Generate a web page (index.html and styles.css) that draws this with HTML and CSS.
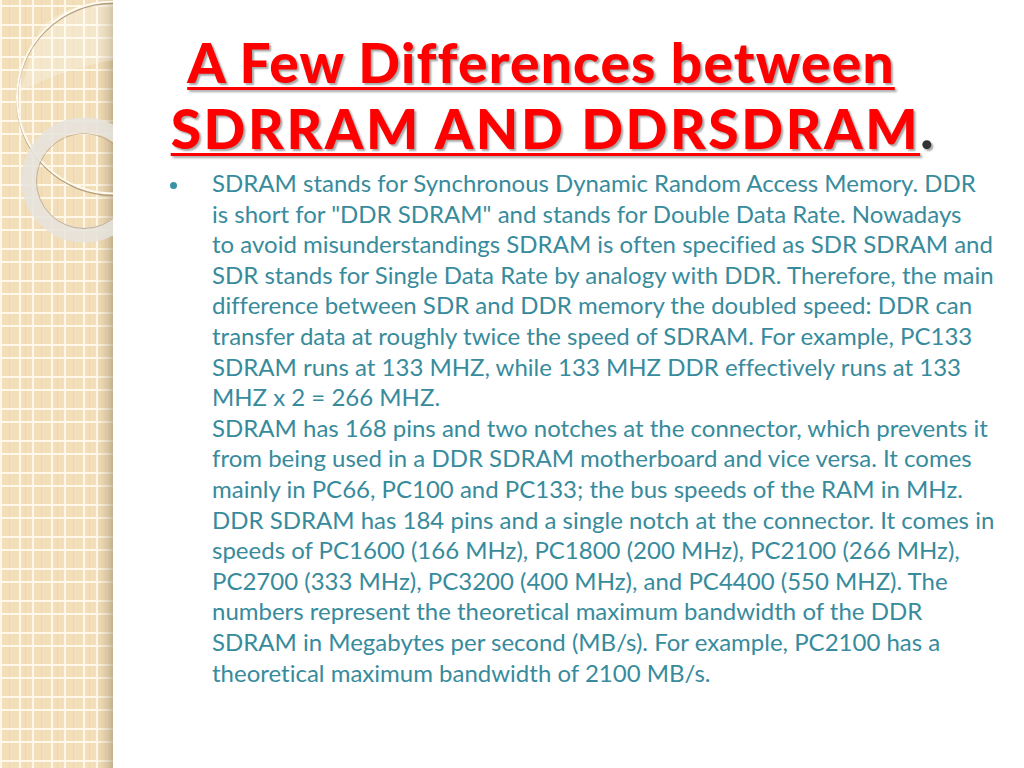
FILE: index.html
```html
<!DOCTYPE html>
<html>
<head>
<meta charset="utf-8">
<link rel="stylesheet" href="styles.css">
</head>
<body>
<div class="slide">
  <div class="strip">
    <svg class="deco" width="113" height="260" viewBox="0 0 113 260">
      <path d="M40 28 A96 96 0 0 1 113 3 L113 60 Q60 70 20 92 Z" fill="#ffffff" opacity="0.25"/>
      <circle cx="113" cy="99" r="96" fill="none" stroke="#9c8460" stroke-width="2" opacity="0.7"/>
      <circle cx="113" cy="97.5" r="96" fill="none" stroke="#fffaf0" stroke-width="2"/>
      <circle cx="84" cy="180" r="55" fill="none" stroke="#e6e2dc" stroke-width="15" opacity="0.88"/>
      <circle cx="84" cy="181" r="47.5" fill="none" stroke="#a89070" stroke-width="1" opacity="0.6"/>
    </svg>
  </div>
  <div class="main">
    <h1 class="title"><span class="u l1">A Few Differences between</span><br><span class="u l2">SDRRAM AND DDRSDRAM</span><span class="dot">.</span></h1>
    <ul class="list">
      <li>SDRAM stands for Synchronous Dynamic Random Access Memory. DDR<br>is short for "DDR SDRAM" and stands for Double Data Rate. Nowadays<br>to avoid misunderstandings SDRAM is often specified as SDR SDRAM and<br>SDR stands for Single Data Rate by analogy with DDR. Therefore, the main<br>difference between SDR and DDR memory the doubled speed: DDR can<br>transfer data at roughly twice the speed of SDRAM. For example, PC133<br>SDRAM runs at 133 MHZ, while 133 MHZ DDR effectively runs at 133<br>MHZ x 2 = 266 MHZ.<br>SDRAM has 168 pins and two notches at the connector, which prevents it<br>from being used in a DDR SDRAM motherboard and vice versa. It comes<br>mainly in PC66, PC100 and PC133; the bus speeds of the RAM in MHz.<br>DDR SDRAM has 184 pins and a single notch at the connector. It comes in<br>speeds of PC1600 (166 MHz), PC1800 (200 MHz), PC2100 (266 MHz),<br>PC2700 (333 MHz), PC3200 (400 MHz), and PC4400 (550 MHZ). The<br>numbers represent the theoretical maximum bandwidth of the DDR<br>SDRAM in Megabytes per second (MB/s). For example, PC2100 has a<br>theoretical maximum bandwidth of 2100 MB/s.</li>
    </ul>
  </div>
</div>
</body>
</html>
```

FILE: styles.css
```css
html, body {
  margin: 0;
  padding: 0;
  background: #ffffff;
}
.slide {
  width: 1024px;
  height: 768px;
  display: flex;
  overflow: hidden;
}
.strip {
  width: 113px;
  height: 768px;
  flex: none;
  background-color: #f2dfba;
  background-image:
    linear-gradient(to right, rgba(255,255,255,0) 96px, rgba(170,150,110,0.25) 106px, rgba(140,120,85,0.45) 113px),
    repeating-linear-gradient(to right, #fff8e8 0, #fff8e8 2px, transparent 2px, transparent 19px, #fff8e8 19px, #fff8e8 21px, transparent 21px, transparent 32px),
    repeating-linear-gradient(to bottom, transparent 0, transparent 5px, #fff8e8 5px, #fff8e8 7px, transparent 7px, transparent 24px, #fff8e8 24px, #fff8e8 26px, transparent 26px, transparent 32px),
    repeating-linear-gradient(to right, transparent 0, transparent 9px, rgba(230,200,190,0.5) 9px, rgba(230,200,190,0.5) 10px, transparent 10px, transparent 16px);
}
.deco {
  display: block;
}
.main {
  flex: 1;
  font-family: "Lato", "Open Sans", sans-serif;
  font-variant-ligatures: none;
}
.title {
  margin: 29px 0 0 33px;
  width: 790px;
  text-align: center;
  font-size: 55px;
  font-weight: 900;
  line-height: 66px;
  color: #ff0000;
  text-shadow: 2px 2px 2px rgba(0,0,0,0.35);
  white-space: nowrap;
}
.u {
  text-decoration: underline;
  text-decoration-thickness: 3px;
  text-underline-offset: 4px;
}
.l1 {
  letter-spacing: 1.2px;
}
.l2 {
  letter-spacing: 2.6px;
  margin-left: 22px;
}
.dot {
  color: #333333;
}
.list {
  margin: 7px 0 0 0;
  padding: 0 0 0 99px;
  list-style: none;
}
.list li {
  position: relative;
  font-size: 24px;
  line-height: 30.6px;
  color: #378b9c;
  white-space: nowrap;
}
.list li::before {
  content: "";
  position: absolute;
  left: -42px;
  top: 14px;
  width: 7px;
  height: 7px;
  border-radius: 50%;
  background: #3a93a5;
}
```
